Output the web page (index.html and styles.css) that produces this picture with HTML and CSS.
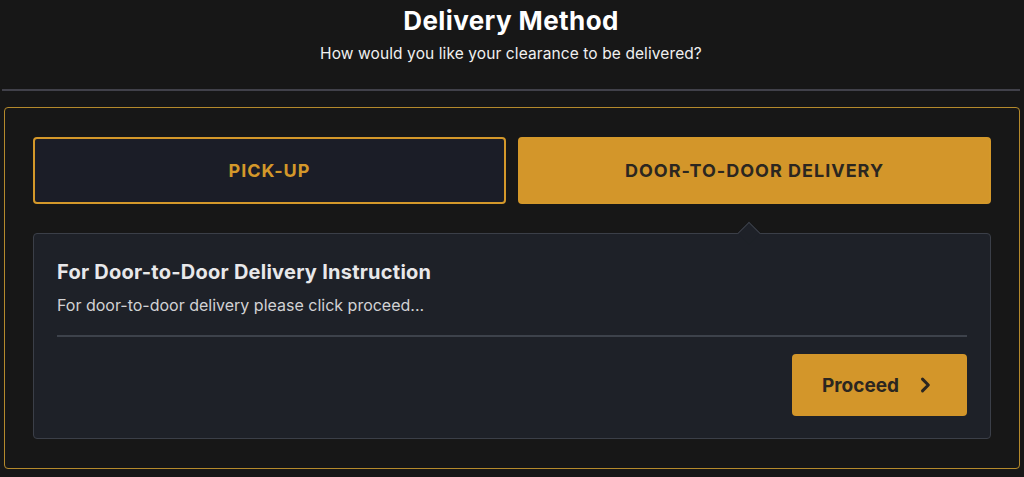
FILE: index.html
```html
<!DOCTYPE html>
<html lang="en">
<head>
    <meta charset="UTF-8">
    <title>Delivery Method</title>
    <link rel="stylesheet" href="styles.css">
</head>
<body>
    <div class="page">
        <!-- Header -->
        <div class="page-header">
            <h1 class="page-title">Delivery Method</h1>
            <p class="page-subtitle">How would you like your clearance to be delivered?</p>
        </div>
        <hr class="header-divider">

        <div class="method-box">
            <div class="method-options">
                <button class="method-btn">PICK-UP</button>
                <button class="method-btn active">DOOR-TO-DOOR DELIVERY</button>
            </div>

            <div class="method-panel">
                <div class="panel-arrow"></div>
                <h3 class="panel-title">For Door-to-Door Delivery Instruction</h3>
                <p class="panel-text">For door-to-door delivery please click proceed...</p>
                <div class="panel-divider"></div>
                <div class="panel-actions">
                    <button class="proceed-btn">
                        Proceed
                        <svg viewBox="0 0 24 24" fill="none" stroke="currentColor" stroke-width="3.6">
                            <path d="M9 5l7 7-7 7" stroke-linecap="round" stroke-linejoin="round"/>
                        </svg>
                    </button>
                </div>
            </div>
        </div>
    </div>
</body>
</html>
```

FILE: styles.css
```css
* {
    margin: 0;
    padding: 0;
    box-sizing: border-box;
    font-family: Inter, "Noto Sans", sans-serif;
}

body {
    background-color: #171717;
    color: #fff;
}

.page {
    padding: 0 4px 0 2px;
}

.page-header {
    text-align: center;
    padding-top: 4px;
}

.page-title {
    font-size: 26px;
    font-weight: 700;
    letter-spacing: 0.4px;
    line-height: 34px;
}

.page-subtitle {
    font-size: 15.5px;
    letter-spacing: 0.1px;
    margin-top: 6px;
    color: #f0f0f0;
}

.header-divider {
    border: none;
    height: 2px;
    background: #41414a;
    margin-top: 26px;
}

.method-box {
    margin: 16px 0 0 2px;
    border: 1.5px solid #b58a2c;
    border-radius: 4px;
    padding: 29px 28px 29px 28px;
}

.method-options {
    display: flex;
    gap: 12px;
}

.method-btn {
    flex: 1;
    height: 67px;
    border: 2px solid #d4982a;
    border-radius: 4px;
    background: #1b1d27;
    color: #d4982a;
    font-size: 18px;
    font-weight: 700;
    letter-spacing: 1px;
    cursor: pointer;
}

.method-btn.active {
    background: #d3962a;
    color: #2b2620;
}

.method-panel {
    position: relative;
    margin-top: 29px;
    background: #1e2128;
    border: 1px solid #3b3f48;
    border-radius: 4px;
    padding: 26px 23px 22px 23px;
}

.panel-arrow {
    position: absolute;
    top: -9px;
    left: 707px;
    width: 16px;
    height: 16px;
    background: #1e2128;
    border-left: 1px solid #3b3f48;
    border-top: 1px solid #3b3f48;
    transform: rotate(45deg);
}

.panel-title {
    font-size: 20px;
    line-height: 24px;
    font-weight: 700;
    letter-spacing: 0.25px;
    color: #e8e8ea;
}

.panel-text {
    font-size: 16px;
    line-height: 20px;
    color: #d2d2d4;
    margin-top: 11px;
}

.panel-divider {
    height: 2px;
    background: #3d424b;
    margin-top: 20px;
}

.panel-actions {
    display: flex;
    justify-content: flex-end;
    margin-top: 17px;
}

.proceed-btn {
    display: flex;
    align-items: center;
    gap: 16px;
    width: 175px;
    height: 62px;
    padding-left: 30px;
    border: none;
    border-radius: 4px;
    background: #d3962a;
    color: #2b2620;
    font-size: 19px;
    font-weight: 700;
    cursor: pointer;
}

.proceed-btn svg {
    width: 20px;
    height: 20px;
}
```
